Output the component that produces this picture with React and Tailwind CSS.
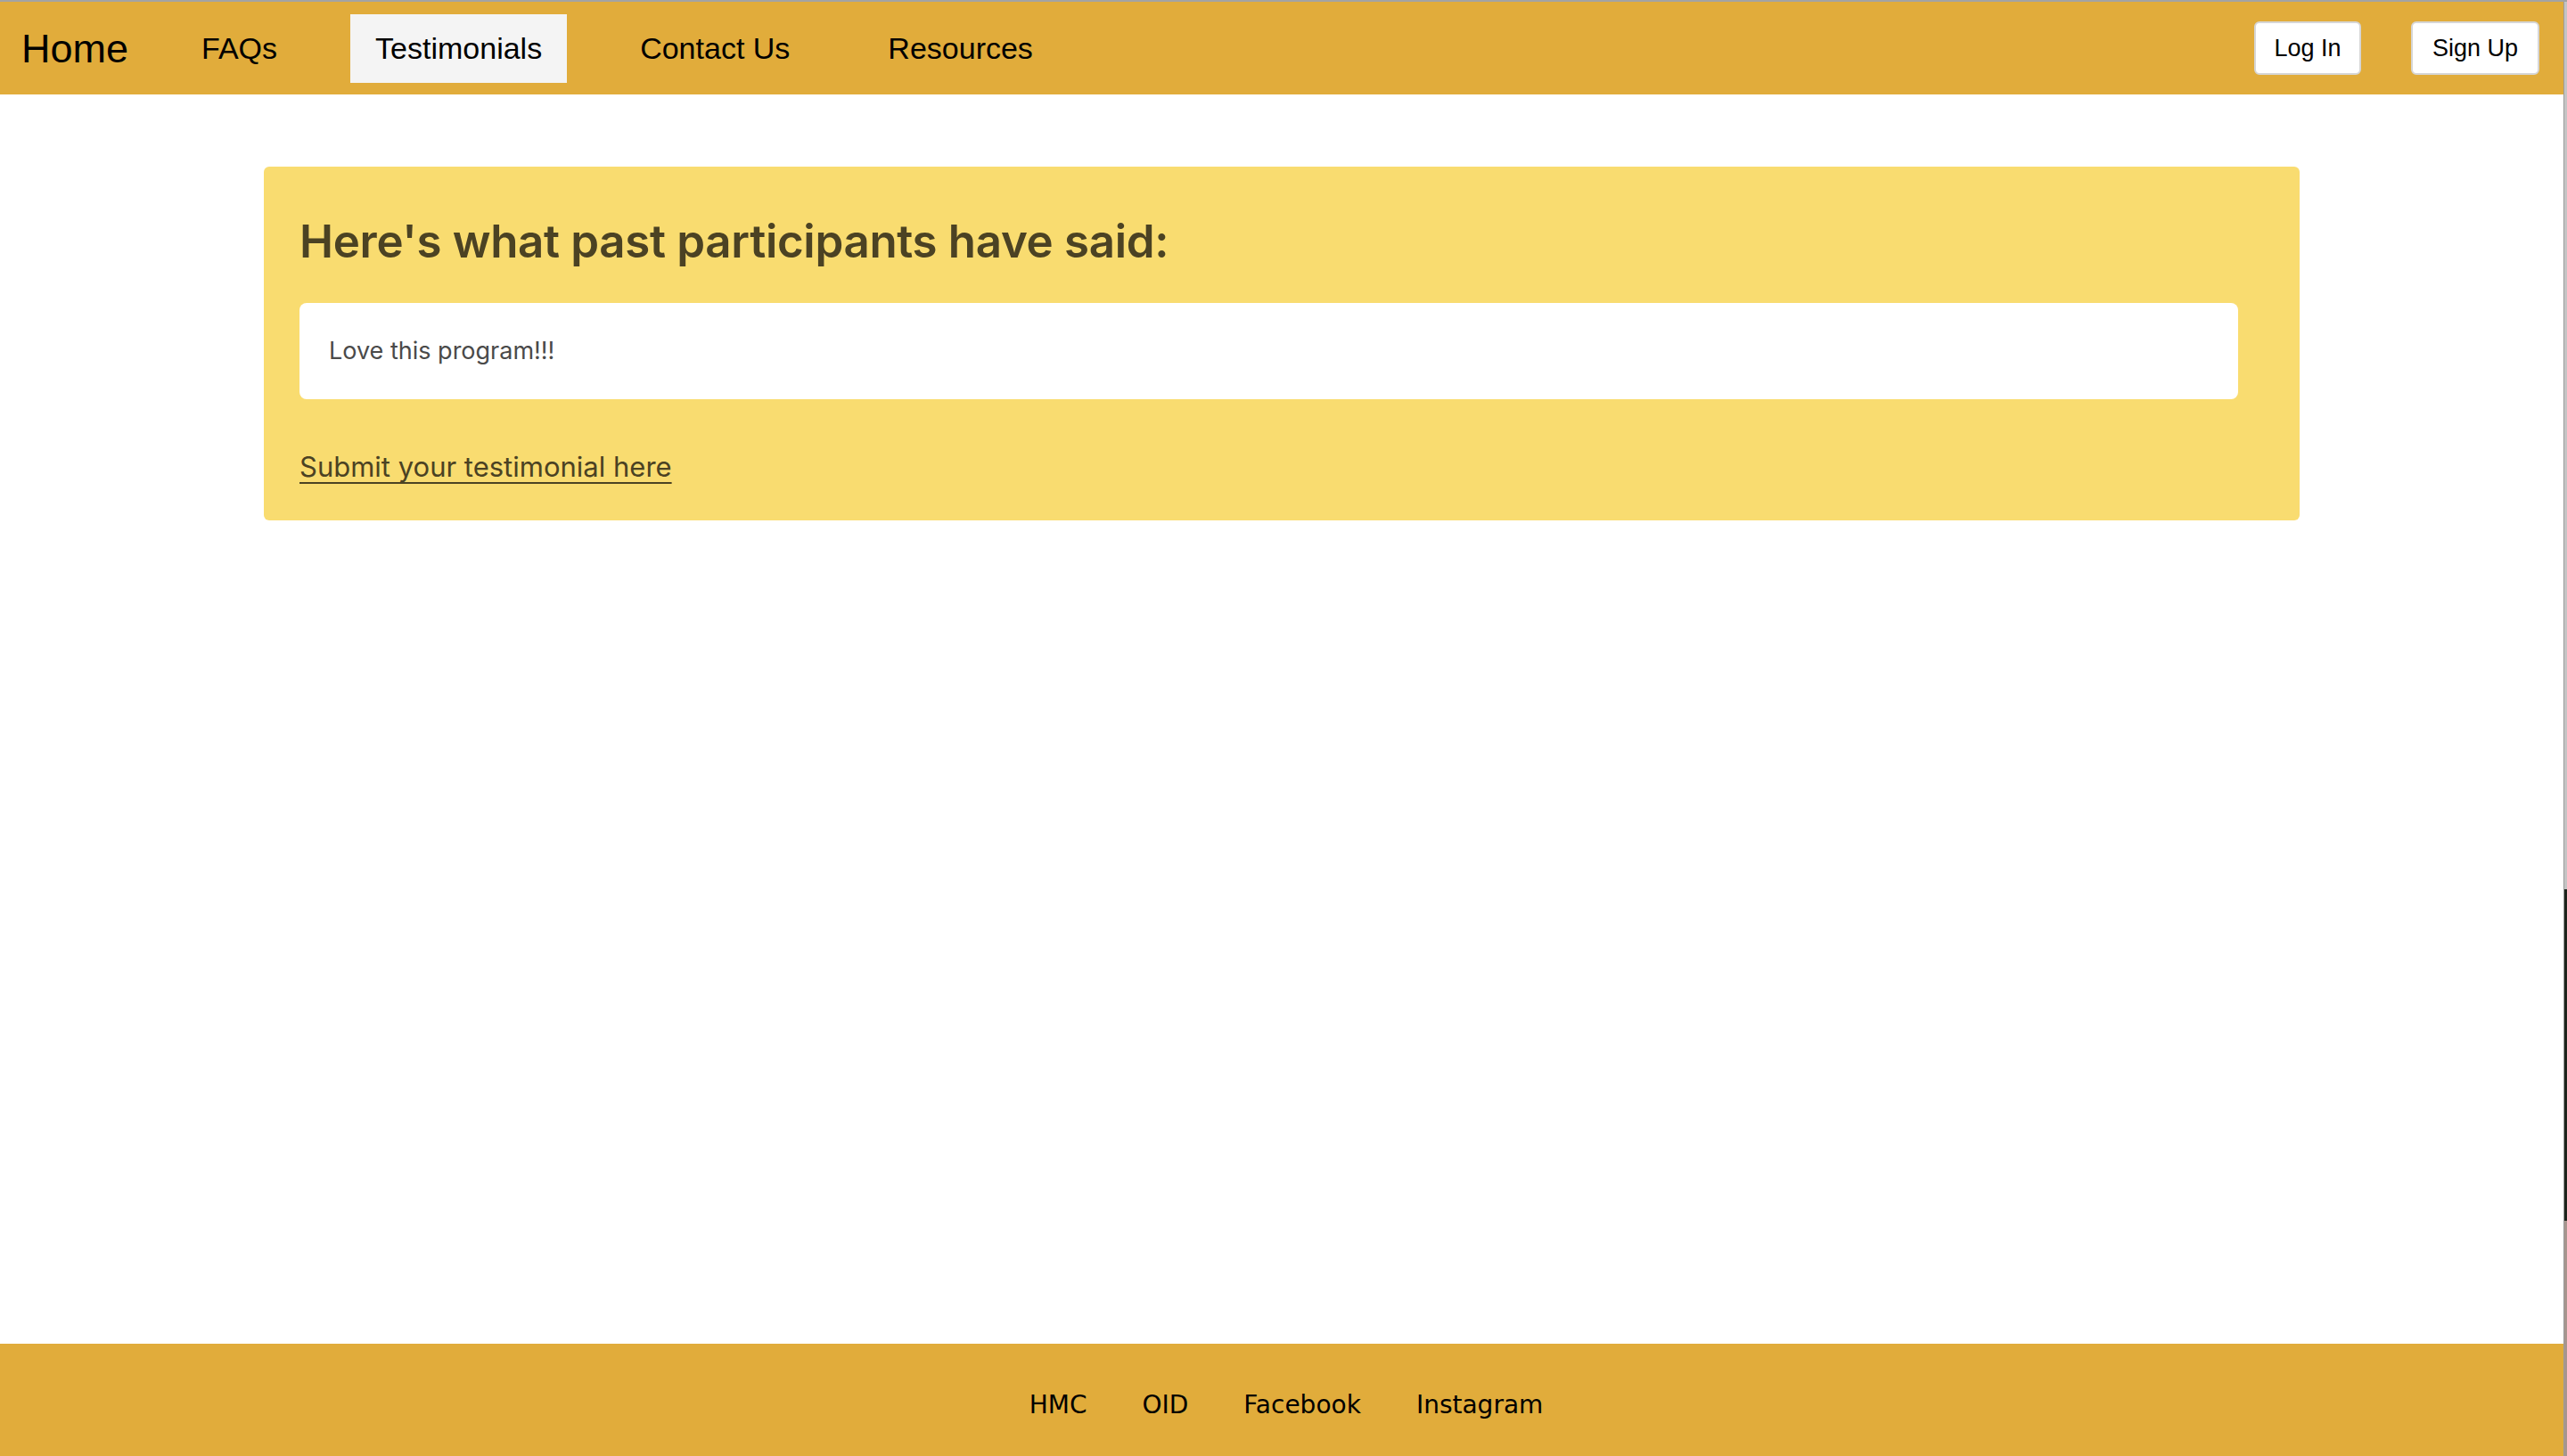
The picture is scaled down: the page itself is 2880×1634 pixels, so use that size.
import React from "react";

const navLinks = ["FAQs", "Testimonials", "Contact Us", "Resources"];
const footerLinks = ["HMC", "OID", "Facebook", "Instagram"];

function Navbar() {
  return (
    <header className="flex h-[104px] items-center justify-between bg-[#e1ac3b] pl-[24px] pr-[27px] font-['Liberation_Sans',Arial,sans-serif] text-black">
      <div className="flex items-center gap-[54px]">
        <a href="#" className="text-[45px] leading-none">
          Home
        </a>
        <nav className="flex items-center gap-[54px]">
          {navLinks.map((l) => (
            <a
              key={l}
              href="#"
              className={`flex h-[77px] items-center px-[28px] text-[34px] ${
                l === "Testimonials" ? "bg-[#f4f4f4]" : ""
              }`}
            >
              {l}
            </a>
          ))}
        </nav>
      </div>
      <div className="flex items-center gap-[56px]">
        <button className="h-[60px] w-[120px] rounded-[6px] border-2 border-[#d6d6d6] bg-white text-[27px]">
          Log In
        </button>
        <button className="h-[60px] w-[144px] rounded-[6px] border-2 border-[#d6d6d6] bg-white text-[27px]">
          Sign Up
        </button>
      </div>
    </header>
  );
}

function Testimonials() {
  return (
    <section className="mx-auto mt-[81px] w-[2284px] rounded-[6px] bg-[#f9dc70] pb-[36px] pl-[40px] pr-[69px] pt-[53px] font-['Inter','Noto_Sans',sans-serif]">
      <h2 className="text-[51px] font-semibold leading-[61px] tracking-[-0.3px] text-[#4b4223]">
        Here's what past participants have said:
      </h2>
      <div className="mt-[39px] rounded-[8px] bg-white px-[33px] py-[35px] text-[27px] leading-[38px] text-[#4a4a4a]">
        Love this program!!!
      </div>
      <a
        href="#"
        className="mt-[52px] block w-fit text-[31px] leading-[48px] text-[#4b4223] underline decoration-2 underline-offset-[6px]"
      >
        Submit your testimonial here
      </a>
    </section>
  );
}

function Footer() {
  return (
    <footer className="flex h-[126px] items-center justify-center bg-[#e1ac3b] pl-[10px] pt-[12px] font-['DejaVu_Sans',Verdana,sans-serif] text-[28px] text-black">
      <div className="flex items-center gap-[62px]">
        {footerLinks.map((l) => (
          <a key={l} href="#">
            {l}
          </a>
        ))}
      </div>
    </footer>
  );
}

export default function App() {
  return (
    <div className="flex h-[1634px] w-full flex-col overflow-hidden bg-[#a3a3a3]">
      <div className="h-[2px] w-full bg-[#a3a3a3]" />
      <div className="flex flex-1">
        {/* page */}
        <main className="flex flex-1 flex-col bg-white">
          <Navbar />
          <div className="flex-1">
            <Testimonials />
          </div>
          <Footer />
        </main>
        {/* window edge */}
        <div className="flex w-[4px] flex-col border-l border-[#9c9c9c]">
          <div className="h-[996px] bg-[#c4c4c4]" />
          <div className="h-[372px] bg-[#1c231b]" />
          <div className="flex-1 bg-[#a7958e]" />
        </div>
      </div>
    </div>
  );
}
